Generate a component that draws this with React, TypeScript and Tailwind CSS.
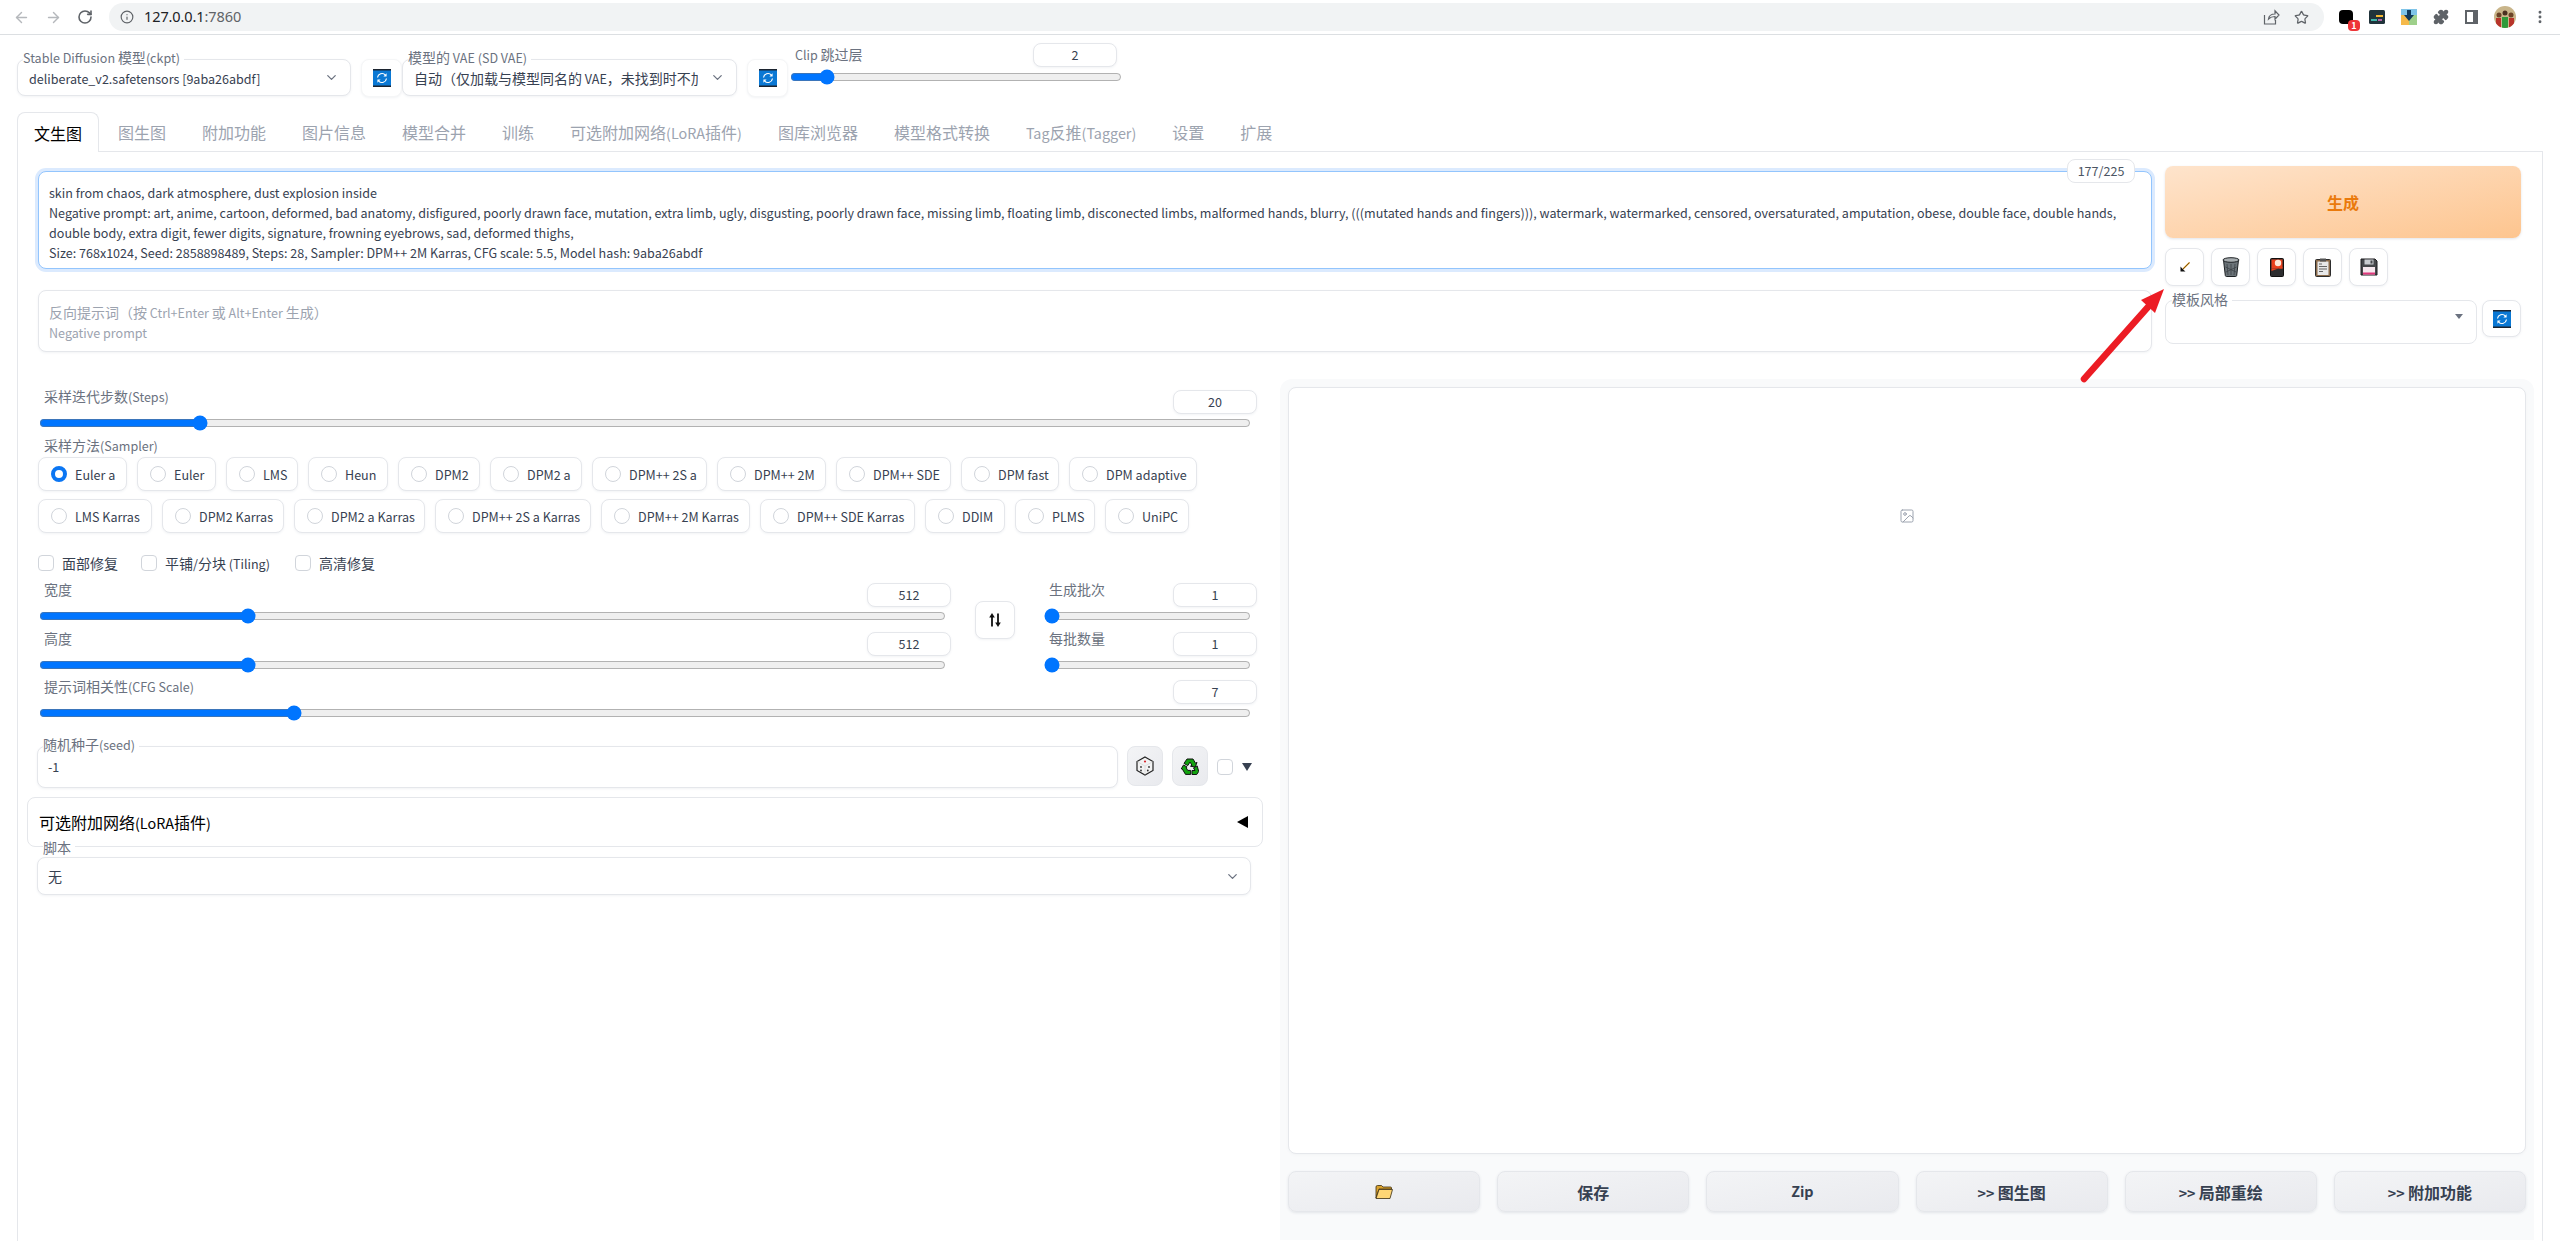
import { ChevronDown, Image, Info, RotateCw, ArrowLeft, ArrowRight, Star, Puzzle, MoreVertical } from "lucide-react";

const font = "[font-family:'Noto_Sans_CJK_SC','Noto_Sans',sans-serif]";

const tabs = [
  "文生图",
  "图生图",
  "附加功能",
  "图片信息",
  "模型合并",
  "训练",
  "可选附加网络(LoRA插件)",
  "图库浏览器",
  "模型格式转换",
  "Tag反推(Tagger)",
  "设置",
  "扩展",
];

const samplersA = [
  ["Euler a", "w-[89px]"],
  ["Euler", "w-[79px]"],
  ["LMS", "w-[72px]"],
  ["Heun", "w-[80px]"],
  ["DPM2", "w-[82px]"],
  ["DPM2 a", "w-[92px]"],
  ["DPM++ 2S a", "w-[115px]"],
  ["DPM++ 2M", "w-[109px]"],
  ["DPM++ SDE", "w-[115px]"],
  ["DPM fast", "w-[98px]"],
  ["DPM adaptive", "w-[128px]"],
];

const samplersB = [
  ["LMS Karras", "w-[114px]"],
  ["DPM2 Karras", "w-[122px]"],
  ["DPM2 a Karras", "w-[131px]"],
  ["DPM++ 2S a Karras", "w-[156px]"],
  ["DPM++ 2M Karras", "w-[149px]"],
  ["DPM++ SDE Karras", "w-[155px]"],
  ["DDIM", "w-[80px]"],
  ["PLMS", "w-[80px]"],
  ["UniPC", "w-[84px]"],
];

// latin glyphs of the CJK font run about 11% large, so shrink them back
function T({ children }: { children: string }) {
  return (
    <>
      {children.split(/([\x20-\x7e]+)/).map((part, i) =>
        /[\x20-\x7e]/.test(part) ? (
          <span key={i} className="text-[0.897em] leading-none">
            {part}
          </span>
        ) : (
          part
        )
      )}
    </>
  );
}

// emoji style icons, the page uses emoji on its tool buttons
function RefreshIcon() {
  return (
    <svg width="18" height="18" viewBox="0 0 18 18">
      <rect width="18" height="18" fill="#0a78d4" />
      <rect width="18" height="1.5" fill="#1c2430" />
      <rect y="16.5" width="18" height="1.5" fill="#1c2430" />
      <path d="M4.5 8.5a4.6 4.6 0 0 1 7.8-2.6" fill="none" stroke="#fff" strokeWidth="1.2" />
      <path d="M13.5 9.5a4.6 4.6 0 0 1-7.8 2.6" fill="none" stroke="#fff" strokeWidth="1.2" />
      <path d="M13.6 4.2v3.2h-3.2z M4.4 13.800v-3.200h3.200z" fill="#fff" />
    </svg>
  );
}

function ArrowIcon() {
  return (
    <svg width="12" height="12" viewBox="0 0 12 12">
      <path d="M10.5 1.5 4 8" stroke="#e8a020" strokeWidth="1.6" />
      <path d="M10.5 1.5 4 8" stroke="#111" strokeWidth="0.5" />
      <path d="M1.5 10.5V5.5L2.8 7 5 9.2l1.5 1.3z" fill="#111" />
    </svg>
  );
}

function TrashIcon() {
  return (
    <svg width="18" height="20" viewBox="0 0 18 20">
      <path d="M1.5 3h15l-1.8 15.5q-.2 1-1.2 1H4.500q-1 0-1.200-1z" fill="#6b7378" stroke="#1d2124" strokeWidth="1" />
      <ellipse cx="9" cy="3" rx="8" ry="2.300" fill="#a7adb0" stroke="#1d2124" strokeWidth="1" />
      <path d="M5 7l1 11M9 7v11M13 7l-1 11M3.500 10l10.500 5M14.500 10L4 15" stroke="#3c4347" strokeWidth="0.8" />
    </svg>
  );
}

function CardIcon() {
  return (
    <svg width="14" height="19" viewBox="0 0 14 19">
      <rect x="0.5" y="0.500" width="13" height="18" rx="1" fill="#2d2d2f" stroke="#111" />
      <rect x="1.500" y="1.500" width="11" height="9" fill="#e8401c" />
      <path d="M1.500 13l11-4v1.500h-11z" fill="#e8401c" />
      <circle cx="8" cy="5" r="3.200" fill="#fde8d8" />
    </svg>
  );
}

function ClipboardIcon() {
  return (
    <svg width="16" height="19" viewBox="0 0 16 19">
      <rect x="0.500" y="1.500" width="15" height="17" rx="1" fill="#8a6a4a" stroke="#2c2c2c" />
      <rect x="2.500" y="3.500" width="11" height="13.500" fill="#e8e8e8" />
      <rect x="5" y="0.500" width="6" height="3" fill="#555" />
      <path d="M4 6h3M4 8.500h8M4 11h8M4 13.500h4" stroke="#666" strokeWidth="1" />
    </svg>
  );
}

function SaveIcon() {
  return (
    <svg width="18" height="18" viewBox="0 0 18 18">
      <path d="M1 1h14l2 2v14H1z" fill="#45474a" stroke="#1c1c1e" />
      <rect x="4.500" y="1.500" width="9" height="5" fill="#c9ccd0" />
      <rect x="10.500" y="2.500" width="2" height="3" fill="#45474a" />
      <rect x="3" y="9" width="12" height="7.500" fill="#f6e8ee" />
      <rect x="3" y="14.500" width="12" height="2" fill="#e0397c" />
    </svg>
  );
}

function DiceIcon() {
  return (
    <svg width="18" height="20" viewBox="0 0 18 20">
      <path d="M9 1l8 4.500v9L9 19l-8-4.500v-9z" fill="#f2f2f2" stroke="#222" strokeWidth="1.200" />
      <path d="M1.500 5.800 9 10l7.500-4.200" fill="none" stroke="#d8d8d8" strokeWidth="0.800" />
      <path d="M9 10v8.500" stroke="#d8d8d8" strokeWidth="0.800" />
      <circle cx="9" cy="5.500" r="1.100" fill="#d8282f" />
      <circle cx="5" cy="11" r="0.900" fill="#333" />
      <circle cx="5" cy="14.500" r="0.900" fill="#333" />
      <circle cx="13" cy="11" r="0.900" fill="#333" />
      <circle cx="11.800" cy="14.500" r="0.900" fill="#333" />
    </svg>
  );
}

function RecycleIcon() {
  return (
    <svg width="18" height="19" viewBox="0 0 18 19">
      <path d="M6 2h6l2.500 4.200 1.500-.8-1.800 4.600-4.700-.8 1.500-.9L9 5 6.800 8.600 3 6.400z" fill="#12a30f" stroke="#111" strokeWidth="1" />
      <path d="M2.500 8l3.600 2-1 .6 1.600 2.800h3v4H4.500L1 11.500l-.8.500z" fill="#12a30f" stroke="#111" strokeWidth="1" />
      <path d="M11 17.500v-4h3l-1.500-2.600 3.700-2 1.500 5.600-2 3h-4.700z" fill="#12a30f" stroke="#111" strokeWidth="1" />
    </svg>
  );
}

function FolderIcon() {
  return (
    <svg width="18" height="16" viewBox="0 0 18 16">
      <path d="M1 3q0-1.500 1.500-1.500h4L8 3h7.500q1 0 1 1v1H4L1 14z" fill="#d9a12c" stroke="#3a2c10" strokeWidth="0.800" />
      <path d="M4 5.500h13.500L15 14.500H1z" fill="#ffd675" stroke="#3a2c10" strokeWidth="0.800" />
    </svg>
  );
}

function SwapIcon() {
  return (
    <svg width="12" height="14" viewBox="0 0 12 14">
      <path d="M3 13.500V3" stroke="#111" strokeWidth="1.800" />
      <path d="M3 0 .2 4.500h5.600z" fill="#111" />
      <path d="M9 .5V11" stroke="#111" strokeWidth="1.800" />
      <path d="M9 14 6.200 9.500h5.600z" fill="#111" />
    </svg>
  );
}

function ToolButton({ children, className = "" }: { children: React.ReactNode; className?: string }) {
  return (
    <button className={`flex items-center justify-center rounded-lg border border-[#e5e7eb] bg-white shadow-sm shadow-gray-100 ${className}`}>
      {children}
    </button>
  );
}

function NumberBox({ value }: { value: string }) {
  return (
    <div className="flex h-[24px] w-[84px] shrink-0 items-center justify-center rounded-lg border border-[#e5e7eb] bg-white text-sm text-[#374151] shadow-sm shadow-gray-100">
      <T>{value}</T>
    </div>
  );
}

function SliderBlock({
  label,
  value,
  min,
  max,
  step = 1,
  endGap = "pr-[6px]",
  className = "",
}: {
  label: string;
  value: string;
  min: number;
  max: number;
  step?: number;
  endGap?: string;
  className?: string;
}) {
  return (
    <div className={className}>
      <div className="flex h-[24px] items-start justify-between">
        <span className="pl-[6px] text-sm leading-[12px] text-[#6b7280]">
          <T>{label}</T>
        </span>
        <NumberBox value={value} />
      </div>
      <div className={`mt-px pl-px ${endGap}`}>
        <input type="range" min={min} max={max} step={step} defaultValue={Number(value)} className="block h-4 w-full" />
      </div>
    </div>
  );
}

function Radio({ label, width, checked = false }: { label: string; width: string; checked?: boolean }) {
  return (
    <label className={`flex h-[34px] items-center gap-[8px] rounded-lg border border-[#e5e7eb] bg-white pl-[12px] text-sm text-[#374151] shadow-sm shadow-gray-100 ${width}`}>
      {checked ? (
        <span className="h-4 w-4 shrink-0 rounded-full border-[4px] border-[#0b76f3] bg-white" />
      ) : (
        <span className="h-4 w-4 shrink-0 rounded-full border border-[#d1d5db] bg-white" />
      )}
      <span className="whitespace-nowrap">
        <T>{label}</T>
      </span>
    </label>
  );
}

function Check({ label, className = "" }: { label: string; className?: string }) {
  return (
    <label className={`flex items-center gap-2 text-sm text-[#374151] ${className}`}>
      <span className="h-4 w-4 rounded border border-[#d1d5db] bg-white" />
      <span>
        <T>{label}</T>
      </span>
    </label>
  );
}

function FieldLabel({ text, className = "" }: { text: string; className?: string }) {
  return (
    <span className={`absolute bg-white pr-1 text-sm leading-[16px] text-[#6b7280] ${className}`}>
      <T>{text}</T>
    </span>
  );
}

function Dropdown({ label, value, className = "" }: { label: string; value: string; className?: string }) {
  return (
    <div className={`relative flex h-[37px] items-center rounded-lg border border-[#e5e7eb] bg-white pl-[11px] pr-[11px] shadow-sm shadow-gray-100 ${className}`}>
      <FieldLabel text={label} className="left-[5px] top-[-11px]" />
      <span className="flex-1 overflow-hidden whitespace-nowrap text-sm text-[#374151]">
        <T>{value}</T>
      </span>
      <ChevronDown size={15} strokeWidth={2} className="ml-3 shrink-0 text-[#6b7280]" />
    </div>
  );
}

function BrowserBar() {
  return (
    <div className="flex h-[35px] items-center border-b border-[#dcdfe2] bg-white">
      <ArrowLeft size={17} className="ml-[13px] text-[#b5b8bc]" />
      <ArrowRight size={17} className="ml-[15px] text-[#b5b8bc]" />
      <RotateCw size={16} strokeWidth={2.4} className="ml-[15px] text-[#5f6368]" />
      <div className="ml-[16px] flex h-[28px] w-[2215px] items-center rounded-full bg-[#f1f3f4] pl-[11px]">
        <Info size={14} className="text-[#5f6368]" />
        <span className="ml-[10px] flex-1 text-[14.5px] font-['Noto_Sans'] tracking-[-0.1px] text-[#202124]">
          127.0.0.1<span className="text-[#5f6368]">:7860</span>
        </span>
        <svg width="17" height="16" viewBox="0 0 17 16" fill="none" stroke="#5f6368" strokeWidth="1.200" className="mr-[14px]">
          <path d="M1.500 6v9h11v-4" />
          <path d="M5.500 10c.4-3 3-5 6.500-5V1.800l4 4.200-4 4.200V7.500c-3 0-5 1-6.500 2.500z" />
        </svg>
        <Star size={15} className="mr-[15px] text-[#5f6368]" />
      </div>
      <div className="ml-[15px] flex items-center gap-[16px]">
        <div className="relative h-[14px] w-[14px] rounded-[4px] bg-black">
          <span className="absolute bottom-[-7px] right-[-7px] flex h-[11px] w-[12px] items-center justify-center rounded-sm bg-[#ee3538] text-[9px] font-bold leading-none text-white">
            1
          </span>
        </div>
        <svg width="16" height="14" viewBox="0 0 16 14">
          <rect width="16" height="14" rx="1.500" fill="#20333b" />
          <rect x="7" y="5" width="7" height="2" fill="#f2b632" />
          <rect x="2" y="9" width="6" height="2" fill="#3fb5a8" />
          <rect x="9" y="9" width="4" height="2" fill="#b565a7" />
        </svg>
        <svg width="16" height="16" viewBox="0 0 16 16">
          <rect width="8" height="16" fill="#f5b94a" />
          <rect x="8" width="8" height="16" fill="#9ed08a" />
          <rect width="16" height="6" fill="#7fc4e8" />
          <path d="M6 1h4v5h3l-5 6-5-6h3z" fill="#123a5c" />
        </svg>
        <Puzzle size={16} fill="#5f6368" className="text-[#5f6368]" />
        <div className="h-[14px] w-[13px] border-[2px] border-r-[5px] border-[#5f6368]" />
        <div className="h-[22px] w-[22px] overflow-hidden rounded-full">
          <svg width="22" height="22" viewBox="0 0 22 22" className="block">
            <rect width="22" height="22" fill="#c9b58a" />
            <rect x="2" y="12" width="5" height="10" fill="#b8342a" />
            <rect x="8" y="11" width="6" height="11" fill="#2f9a3a" />
            <rect x="15" y="12" width="5" height="10" fill="#b8342a" />
            <circle cx="5" cy="9" r="2.500" fill="#6b4428" />
            <circle cx="11" cy="7" r="2.500" fill="#4a3020" />
            <circle cx="17" cy="9" r="2.500" fill="#6b4428" />
          </svg>
        </div>
        <MoreVertical size={16} strokeWidth={2.4} className="text-[#5f6368]" />
      </div>
    </div>
  );
}

export default function App() {
  return (
    <div className={`relative h-[1241px] w-[2560px] overflow-hidden bg-white ${font}`}>
      <BrowserBar />

      {/* model selectors */}
      <div className="flex h-[61px] items-start pl-[17px] pt-[8px]">
        <Dropdown
          label="Stable Diffusion 模型(ckpt)"
          value="deliberate_v2.safetensors [9aba26abdf]"
          className="mt-[16px] w-[334px]"
        />
        <ToolButton className="ml-[10px] mt-[16px] h-[38px] w-[41px] border-[#f5f6f7]">
          <RefreshIcon />
        </ToolButton>
        <Dropdown
          label="模型的 VAE (SD VAE)"
          value="自动（仅加载与模型同名的 VAE，未找到时不加载）"
          className="mt-[16px] w-[335px]"
        />
        <ToolButton className="ml-[10px] mt-[16px] h-[38px] w-[41px] border-[#f5f6f7]">
          <RefreshIcon />
        </ToolButton>
        <div className="ml-[2px] w-[333px]">
          <div className="flex h-[24px] items-start justify-between pr-[6px]">
            <span className="pl-[5px] pt-[3px] text-sm leading-[16px] text-[#6b7280]">
              <T>Clip 跳过层</T>
            </span>
            <NumberBox value="2" />
          </div>
          <input type="range" min={1} max={12} defaultValue={2} className="mt-[2px] block h-4 w-[332px]" />
        </div>
      </div>

      {/* tabs */}
      <div className="ml-[17px] mt-[17px] flex h-[39px] w-[2526px] items-end gap-[2px] border-b border-[#e5e7eb]">
        {tabs.map((tab, i) => (
          <button
            key={tab}
            className={
              i === 0
                ? "relative -mb-px h-[40px] rounded-t-lg border border-b-0 border-[#e5e7eb] bg-white px-4 text-base whitespace-nowrap text-black"
                : "-mb-px h-[40px] border border-transparent px-4 text-base whitespace-nowrap text-[#9ca3af]"
            }
          >
            <T>{tab}</T>
          </button>
        ))}
      </div>

      {/* tab panel */}
      <div className="ml-[17px] h-[1089px] w-[2526px] border-x border-[#e5e7eb] pl-[20px] pt-[14px]">
        <div className="flex items-start">
          <div className="mt-[5px] w-[2114px]">
            <div className="relative h-[98px] rounded-lg border border-[#93c5fd] bg-white px-[10px] pt-[10px] text-sm leading-[20px] text-[#374151] shadow-[0_0_0_3px_#dbeafe]">
              <span className="absolute right-[16px] top-[-13px] flex h-[24px] w-[68px] items-center justify-center rounded-lg border border-[#e5e7eb] bg-white text-sm text-[#4b5563]">
                <T>177/225</T>
              </span>
              <p>
                <T>skin from chaos, dark atmosphere, dust explosion inside</T>
              </p>
              <p>
                <T>Negative prompt: art, anime, cartoon, deformed, bad anatomy, disfigured, poorly drawn face, mutation, extra limb, ugly, disgusting, poorly drawn face, missing limb, floating limb, disconected limbs, malformed hands, blurry, (((mutated hands and fingers))), watermark, watermarked, censored, oversaturated, amputation, obese, double face, double hands, double body, extra digit, fewer digits, signature, frowning eyebrows, sad, deformed thighs,</T>
              </p>
              <p>
                <T>Size: 768x1024, Seed: 2858898489, Steps: 28, Sampler: DPM++ 2M Karras, CFG scale: 5.5, Model hash: 9aba26abdf</T>
              </p>
            </div>
            <div className="mt-[21px] h-[62px] rounded-lg border border-[#e5e7eb] bg-white px-[10px] pt-[11px] text-sm leading-[20px] text-[#9ca3af] shadow-sm shadow-gray-100">
              <p>
                <T>反向提示词（按 Ctrl+Enter 或 Alt+Enter 生成）</T>
              </p>
              <p>
                <T>Negative prompt</T>
              </p>
            </div>
          </div>

          <div className="ml-[13px] w-[356px]">
            <button className="flex h-[72px] w-full items-center justify-center rounded-lg bg-gradient-to-br from-[#fee4cc] to-[#fdc58f] text-base font-semibold text-[#ea7a0c] shadow-sm shadow-gray-200">
              生成
            </button>
            <div className="mt-[10px] flex gap-[7px]">
              <ToolButton className="h-[38px] w-[39px]">
                <ArrowIcon />
              </ToolButton>
              <ToolButton className="h-[38px] w-[39px]">
                <TrashIcon />
              </ToolButton>
              <ToolButton className="h-[38px] w-[39px]">
                <CardIcon />
              </ToolButton>
              <ToolButton className="h-[38px] w-[39px]">
                <ClipboardIcon />
              </ToolButton>
              <ToolButton className="h-[38px] w-[39px]">
                <SaveIcon />
              </ToolButton>
            </div>
            <div className="mt-[14px] flex items-start gap-[5px]">
              <div className="relative h-[44px] w-[313px] rounded-lg border border-[#e5e7eb] bg-white">
                <FieldLabel text="模板风格" className="left-[6px] top-[-10px]" />
                <span className="absolute right-[13px] top-[13px] h-0 w-0 border-x-[4px] border-t-[5px] border-x-transparent border-t-[#6b7280]" />
              </div>
              <ToolButton className="h-[37px] w-[39px]">
                <RefreshIcon />
              </ToolButton>
            </div>
          </div>
        </div>

        <div className="mt-[27px] flex items-start">
          {/* settings column */}
          <div className="w-[1219px] pt-[11px]">
            <SliderBlock label="采样迭代步数(Steps)" value="20" min={1} max={150} />

            <div className="mt-[4px] pl-[6px] text-sm leading-[20px] text-[#6b7280]">
              <T>采样方法(Sampler)</T>
            </div>
            <div className="mt-[2px] flex gap-[10px]">
              {samplersA.map(([name, width], i) => (
                <Radio key={name} label={name} width={width} checked={i === 0} />
              ))}
            </div>
            <div className="mt-[8px] flex gap-[10px]">
              {samplersB.map(([name, width]) => (
                <Radio key={name} label={name} width={width} />
              ))}
            </div>

            <div className="mt-[20px] flex h-5 items-center">
              <Check label="面部修复" className="w-[103px]" />
              <Check label="平铺/分块 (Tiling)" className="w-[154px]" />
              <Check label="高清修复" />
            </div>

            <div className="mt-[10px] flex items-start">
              <div className="w-[913px]">
                <SliderBlock label="宽度" value="512" min={64} max={2048} step={8} endGap="pr-[5px]" />
                <SliderBlock label="高度" value="512" min={64} max={2048} step={8} endGap="pr-[5px]" className="mt-[8px]" />
              </div>
              <ToolButton className="ml-[24px] mt-[18px] h-[38px] w-[40px] shrink-0">
                <SwapIcon />
              </ToolButton>
              <div className="ml-[28px] flex-1">
                <SliderBlock label="生成批次" value="1" min={1} max={100} />
                <SliderBlock label="每批数量" value="1" min={1} max={8} className="mt-[8px]" />
              </div>
            </div>

            <SliderBlock label="提示词相关性(CFG Scale)" value="7" min={1} max={30} className="mt-[7px]" />

            {/* seed */}
            <div className="mt-[25px] -ml-px flex items-start">
              <div className="relative flex h-[42px] w-[1081px] items-center rounded-lg border border-[#e5e7eb] bg-white pl-[10px] text-sm text-[#374151] shadow-sm shadow-gray-100">
                <FieldLabel text="随机种子(seed)" className="left-[5px] top-[-11px]" />
                <T>-1</T>
              </div>
              <button className="ml-[9px] flex h-[40px] w-[36px] items-center justify-center rounded-lg border border-[#e5e7eb] bg-gradient-to-br from-[#f3f4f6] to-[#e9eaee]">
                <DiceIcon />
              </button>
              <button className="ml-[9px] flex h-[40px] w-[36px] items-center justify-center rounded-lg border border-[#e5e7eb] bg-gradient-to-br from-[#f3f4f6] to-[#e9eaee]">
                <RecycleIcon />
              </button>
              <span className="ml-[9px] mt-[13px] h-4 w-4 rounded border border-[#d1d5db] bg-white" />
              <span className="ml-[9px] mt-[17px] h-0 w-0 border-x-[5px] border-t-[8px] border-x-transparent border-t-[#374151]" />
            </div>

            {/* lora accordion */}
            <div className="-ml-[11px] mt-[9px] flex h-[50px] w-[1236px] items-center justify-between rounded-lg border border-[#e5e7eb] bg-white pl-[11px] pr-[14px] text-base text-black">
              <span>
                <T>可选附加网络(LoRA插件)</T>
              </span>
              <span className="h-0 w-0 border-y-[6px] border-r-[11px] border-y-transparent border-r-black" />
            </div>

            <div className="-ml-px mt-[10px]">
              <div className="relative flex h-[38px] w-[1214px] items-center rounded-lg border border-[#e5e7eb] bg-white pl-[10px] pr-[10px] text-sm text-[#374151] shadow-sm shadow-gray-100">
                <FieldLabel text="脚本" className="left-[5px] top-[-19px] bg-transparent" />
                <span className="flex-1">无</span>
                <ChevronDown size={15} className="text-[#6b7280]" />
              </div>
            </div>
          </div>

          {/* output column */}
          <div className="ml-[23px] h-[861px] w-[1254px] rounded-t-xl bg-[#f9fafb] px-2 pt-2">
            <div className="flex h-[767px] justify-center rounded-lg border border-[#e5e7eb] bg-white pt-[120px] shadow-sm shadow-gray-100">
              <Image size={16} strokeWidth={1.5} className="text-[#9ca3af]" />
            </div>
            <div className="mt-[17px] grid grid-cols-6 gap-[17px]">
              <OutputButton>
                <FolderIcon />
              </OutputButton>
              <OutputButton>保存</OutputButton>
              <OutputButton>
                <T>Zip</T>
              </OutputButton>
              <OutputButton>
                <span>
                  <T>&gt;&gt; 图生图</T>
                </span>
              </OutputButton>
              <OutputButton>
                <span>
                  <T>&gt;&gt; 局部重绘</T>
                </span>
              </OutputButton>
              <OutputButton>
                <span>
                  <T>&gt;&gt; 附加功能</T>
                </span>
              </OutputButton>
            </div>
          </div>
        </div>
      </div>

      {/* annotation arrow drawn over the screenshot */}
      <svg width="100" height="110" viewBox="0 0 100 110" className="absolute left-[2072px] top-[283px]">
        <path d="M12 96 L76 24" stroke="#ec1c24" strokeWidth="6.5" strokeLinecap="round" fill="none" />
        <path d="M92 6 L69 17 L83 30 Z" fill="#ec1c24" />
      </svg>
    </div>
  );
}

function OutputButton({ children }: { children: React.ReactNode }) {
  return (
    <button className="flex h-[41px] items-center justify-center rounded-lg border border-[#e5e7eb] bg-gradient-to-br from-[#f3f4f6] to-[#e9eaee] text-base font-semibold text-[#374151] shadow-sm shadow-gray-200">
      {children}
    </button>
  );
}
